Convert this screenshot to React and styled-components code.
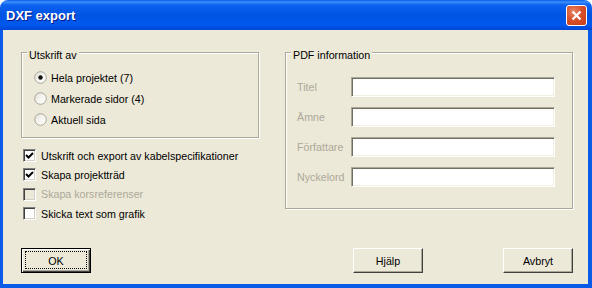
import React from 'react';
import styled, { createGlobalStyle } from 'styled-components';

const GlobalStyle = createGlobalStyle`
  html, body {
    margin: 0;
    background: #fff;
  }
  * {
    box-sizing: border-box;
  }
`;

const Window = styled.div`
  width: 592px;
  height: 288px;
  display: flex;
  flex-direction: column;
  border-radius: 8px 8px 0 0;
  overflow: hidden;
  font-family: 'Liberation Sans', Arial, sans-serif;
  font-size: 10.7px;
  color: #000;
`;

const TitleBar = styled.div`
  height: 30px;
  padding: 1px 5px 0 6px;
  display: flex;
  align-items: center;
  background: linear-gradient(
    180deg,
    #0a5de8 0%,
    #3d8ffb 7%,
    #0e62f0 16%,
    #0054e3 50%,
    #0058ee 82%,
    #0046d4 100%
  );
`;

const Title = styled.div`
  flex: 1;
  font-size: 13px;
  line-height: 16px;
  font-weight: bold;
  color: #fff;
  text-shadow: 1px 1px #0a1883;
`;

const CloseButton = styled.div`
  width: 21px;
  height: 21px;
  border: 1px solid #fff;
  border-radius: 3px;
  background: radial-gradient(circle at 35% 30%, #e8876a 0%, #d9512a 45%, #c63d17 100%);
  display: flex;
  align-items: center;
  justify-content: center;
`;

const Body = styled.div`
  flex: 1;
  display: flex;
  flex-direction: column;
  background: #ece9d8;
  border-style: solid;
  border-color: #0a5be8;
  border-width: 0 4px 4px 3px;
  padding: 22px 15px 11px 18px;
`;

const Columns = styled.div`
  display: flex;
  align-items: flex-start;
  gap: 26px;
`;

const LeftColumn = styled.div`
  width: 238px;
  display: flex;
  flex-direction: column;
`;

const Group = styled.div`
  position: relative;
  width: ${p => p.width}px;
  border: 1px solid #aca899;
  box-shadow: inset 1px 1px 0 #fff, 1px 1px 0 #fff;
  padding: ${p => p.pad};
  display: flex;
  flex-direction: column;
  gap: ${p => p.gap || 0}px;
`;

const Caption = styled.span`
  position: absolute;
  top: -4px;
  left: 5px;
  padding: 0 2px;
  line-height: 13px;
  background: #ece9d8;
`;

const OptionRow = styled.label`
  display: flex;
  align-items: center;
  gap: ${p => p.gap}px;
  height: ${p => p.h}px;
  padding-left: ${p => p.indent || 0}px;
  color: ${p => (p.disabled ? '#aca899' : '#000')};
`;

const CheckList = styled.div`
  margin-top: 8px;
  display: flex;
  flex-direction: column;
`;

const CheckBox = styled.span`
  width: 13px;
  height: 13px;
  flex: none;
  display: flex;
  align-items: center;
  justify-content: center;
  border: 1px solid;
  border-color: #808080 #fff #fff #808080;
  box-shadow: inset 1px 1px 0 #404040, inset -1px -1px 0 #d4d0c8;
  background: ${p => (p.disabled ? '#ece9d8' : '#fff')};
`;

const FieldRow = styled.div`
  display: flex;
  align-items: center;
  height: 20px;
`;

const FieldLabel = styled.span`
  width: 54px;
  color: #aca899;
`;

const TextBox = styled.div`
  width: 204px;
  height: 20px;
  background: #fff;
  border: 1px solid;
  border-color: #aca899 #fff #fff #aca899;
  box-shadow: inset 1px 1px 0 #716f64, inset -1px -1px 0 #f1efe2;
`;

const ButtonRow = styled.div`
  margin-top: auto;
  display: flex;
  gap: 80px;
`;

const Button = styled.div`
  position: relative;
  width: 70px;
  height: 25px;
  display: flex;
  align-items: center;
  justify-content: center;
  background: #ece9d8;
  border: 1px solid;
  border-color: ${p => (p.primary ? '#000' : '#fff #404040 #404040 #fff')};
  box-shadow: ${p =>
    p.primary
      ? 'inset 1px 1px 0 #fff, inset -1px -1px 0 #404040, inset -2px -2px 0 #aca899'
      : 'inset -1px -1px 0 #aca899'};
  margin-right: ${p => (p.push ? 'auto' : '0')};

  &::after {
    content: '';
    display: ${p => (p.primary ? 'block' : 'none')};
    position: absolute;
    inset: 2px 3px 3px 3px;
    border: 1px dotted #000;
  }
`;

const Radio = ({ checked }) => (
  <svg width="13" height="13" viewBox="0 0 13 13">
    <defs>
      <linearGradient id="rg" x1="0" y1="0" x2="1" y2="1">
        <stop offset="0" stopColor="#dcdad2" />
        <stop offset="0.5" stopColor="#f6f5f0" />
        <stop offset="1" stopColor="#ffffff" />
      </linearGradient>
    </defs>
    <circle cx="6.5" cy="6.5" r="5.8" fill="url(#rg)" stroke="#a9a699" strokeWidth="1" />
    {checked && <circle cx="6.5" cy="6.5" r="2.2" fill="#111" />}
  </svg>
);

const Check = ({ checked, disabled }) => (
  <CheckBox disabled={disabled}>
    {checked && (
      <svg width="9" height="9" viewBox="0 0 9 9">
        <polyline points="1,4 3.5,6.5 8,2" fill="none" stroke="#000" strokeWidth="2" />
      </svg>
    )}
  </CheckBox>
);

const radios = [
  { label: 'Hela projektet (7)', checked: true },
  { label: 'Markerade sidor (4)' },
  { label: 'Aktuell sida' },
];

const checks = [
  { label: 'Utskrift och export av kabelspecifikationer', checked: true },
  { label: 'Skapa projektträd', checked: true },
  { label: 'Skapa korsreferenser', disabled: true },
  { label: 'Skicka text som grafik' },
];

const fields = ['Titel', 'Ämne', 'Författare', 'Nyckelord'];

export default function App() {
  return (
    <>
      <GlobalStyle />
      <Window>
        <TitleBar>
          <Title>DXF export</Title>
          <CloseButton>
            <svg width="11" height="11" viewBox="0 0 11 11">
              <path d="M1.5 1.5 L9.5 9.5 M9.5 1.5 L1.5 9.5" stroke="#fff" strokeWidth="2.2" />
            </svg>
          </CloseButton>
        </TitleBar>
        <Body>
          <Columns>
            <LeftColumn>
              <Group width={238} pad="14px 0 7px 12px">
                <Caption>Utskrift av</Caption>
                {radios.map(r => (
                  <OptionRow key={r.label} h={21} gap={4}>
                    <Radio checked={r.checked} />
                    {r.label}
                  </OptionRow>
                ))}
              </Group>
              <CheckList>
                {checks.map(c => (
                  <OptionRow key={c.label} h={19.33} gap={5} indent={2} disabled={c.disabled}>
                    <Check checked={c.checked} disabled={c.disabled} />
                    {c.label}
                  </OptionRow>
                ))}
              </CheckList>
            </LeftColumn>
            <Group width={288} pad="24px 17px 21px 11px" gap={10}>
              <Caption>PDF information</Caption>
              {fields.map(f => (
                <FieldRow key={f}>
                  <FieldLabel>{f}</FieldLabel>
                  <TextBox />
                </FieldRow>
              ))}
            </Group>
          </Columns>
          <ButtonRow>
            <Button primary push>OK</Button>
            <Button>Hjälp</Button>
            <Button>Avbryt</Button>
          </ButtonRow>
        </Body>
      </Window>
    </>
  );
}
